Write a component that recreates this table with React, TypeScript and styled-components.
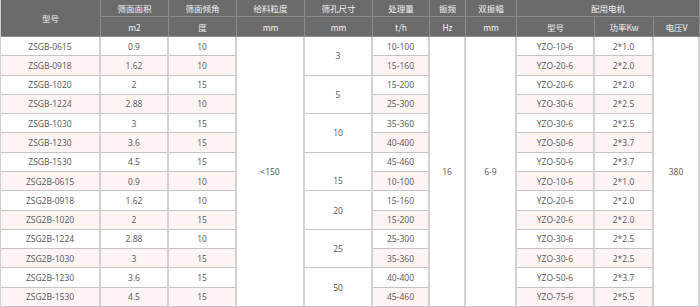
import React from "react";
import styled, { createGlobalStyle } from "styled-components";

const Global = createGlobalStyle`
  html, body { margin: 0; padding: 0; background: #fff; }
  body { font-family: "Open Sans", "Noto Sans CJK SC", sans-serif; }
`;

const Grid = styled.div`
  display: grid;
  width: 700px;
  height: 307px;
  box-sizing: border-box;
  border-left: 1px solid #cfcfcf;
  grid-template-columns: 100px 68px 68px 68px 68px 57px 36px 51px 78px 59px 46px;
  grid-template-rows: 17px 20px repeat(14, 1fr);
  font-family: "Open Sans", "Noto Sans CJK SC", sans-serif;
  font-size: 8.5px;
`;

const Head = styled.div<{ $rows?: number; $cols?: number }>`
  grid-row: span ${(p) => p.$rows ?? 1};
  grid-column: span ${(p) => p.$cols ?? 1};
  display: flex;
  align-items: center;
  justify-content: center;
  background: #6b6b6b;
  color: #f2f2f2;
  border-right: 1px solid #8c8c8c;
  border-bottom: 1px solid #8c8c8c;
  box-sizing: border-box;
  font-family: "Noto Sans CJK SC", "Open Sans", sans-serif;
  white-space: nowrap;
`;

const Cell = styled.div<{ $rows?: number; $alt?: boolean; $shift?: number }>`
  grid-row: span ${(p) => p.$rows ?? 1};
  display: flex;
  align-items: center;
  justify-content: center;
  background: ${(p) => (p.$alt ? "#fef4f4" : "#ffffff")};
  color: #555;
  border-right: 2px solid #d2d2d2;
  border-bottom: 1px solid #c4c4c4;
  box-sizing: border-box;
  padding-top: ${(p) => p.$shift ?? 0}px;
  white-space: nowrap;
`;

type Row = {
  model: string;
  area: string;
  angle: string;
  hole?: string;
  holeShift?: number;
  cap: string;
  motor: string;
  power: string;
};

const rows: Row[] = [
  { model: "ZSGB-0615", area: "0.9", angle: "10", hole: "3", cap: "10-100", motor: "YZO-10-6", power: "2*1.0" },
  { model: "ZSGB-0918", area: "1.62", angle: "10", cap: "15-160", motor: "YZO-20-6", power: "2*2.0" },
  { model: "ZSGB-1020", area: "2", angle: "15", hole: "5", cap: "15-200", motor: "YZO-20-6", power: "2*2.0" },
  { model: "ZSGB-1224", area: "2.88", angle: "10", cap: "25-300", motor: "YZO-30-6", power: "2*2.5" },
  { model: "ZSGB-1030", area: "3", angle: "15", hole: "10", cap: "35-360", motor: "YZO-30-6", power: "2*2.5" },
  { model: "ZSGB-1230", area: "3.6", angle: "15", cap: "40-400", motor: "YZO-50-6", power: "2*3.7" },
  { model: "ZSGB-1530", area: "4.5", angle: "15", hole: "15", holeShift: 19, cap: "45-460", motor: "YZO-50-6", power: "2*3.7" },
  { model: "ZSG2B-0615", area: "0.9", angle: "10", cap: "10-100", motor: "YZO-10-6", power: "2*1.0" },
  { model: "ZSG2B-0918", area: "1.62", angle: "10", hole: "20", cap: "15-160", motor: "YZO-20-6", power: "2*2.0" },
  { model: "ZSG2B-1020", area: "2", angle: "15", cap: "15-200", motor: "YZO-20-6", power: "2*2.0" },
  { model: "ZSG2B-1224", area: "2.88", angle: "10", hole: "25", cap: "25-300", motor: "YZO-30-6", power: "2*2.5" },
  { model: "ZSG2B-1030", area: "3", angle: "15", cap: "35-360", motor: "YZO-30-6", power: "2*2.5" },
  { model: "ZSG2B-1230", area: "3.6", angle: "15", hole: "50", cap: "40-400", motor: "YZO-50-6", power: "2*3.7" },
  { model: "ZSG2B-1530", area: "4.5", angle: "15", cap: "45-460", motor: "YZO-75-6", power: "2*5.5" },
];

export default function App() {
  return (
    <>
      <Global />
      <Grid>
        <Head $rows={2}>型号</Head>
        <Head>筛面面积</Head>
        <Head>筛面倾角</Head>
        <Head>给料粒度</Head>
        <Head>筛孔尺寸</Head>
        <Head>处理量</Head>
        <Head>振频</Head>
        <Head>双振幅</Head>
        <Head $cols={3}>配用电机</Head>
        <Head>m2</Head>
        <Head>度</Head>
        <Head>mm</Head>
        <Head>mm</Head>
        <Head>t/h</Head>
        <Head>Hz</Head>
        <Head>mm</Head>
        <Head>型号</Head>
        <Head>功率Kw</Head>
        <Head>电压V</Head>
        {rows.map((r, i) => {
          const alt = i % 2 === 1;
          return (
            <React.Fragment key={i}>
              <Cell $alt={alt}>{r.model}</Cell>
              <Cell $alt={alt}>{r.area}</Cell>
              <Cell $alt={alt}>{r.angle}</Cell>
              {i === 0 && <Cell $rows={14}>&lt;150</Cell>}
              {r.hole && (
                <Cell $rows={2} $shift={r.holeShift}>
                  {r.hole}
                </Cell>
              )}
              <Cell $alt={alt}>{r.cap}</Cell>
              {i === 0 && <Cell $rows={14}>16</Cell>}
              {i === 0 && <Cell $rows={14}>6-9</Cell>}
              <Cell $alt={alt}>{r.motor}</Cell>
              <Cell $alt={alt}>{r.power}</Cell>
              {i === 0 && <Cell $rows={14}>380</Cell>}
            </React.Fragment>
          );
        })}
      </Grid>
    </>
  );
}
